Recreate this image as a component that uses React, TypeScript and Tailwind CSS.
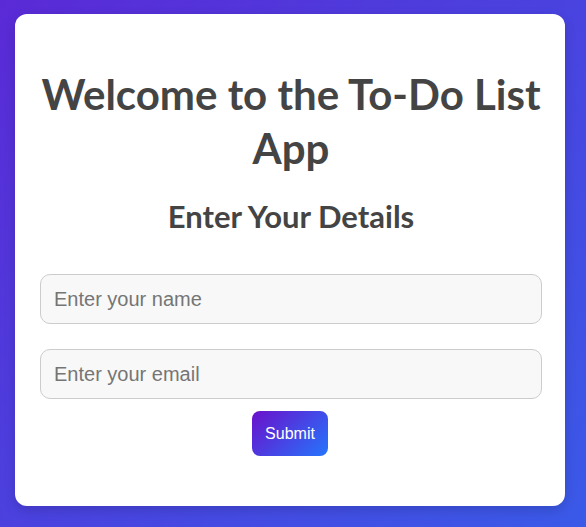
import React from "react";

export default function App() {
  return (
    <div className="min-h-[527px] w-full bg-[linear-gradient(135deg,#5a2ad6,#3a5ae8)] pl-[15px] pr-[21px] pt-[14px] pb-[22px]">
      <div className="flex flex-col items-center rounded-[12px] bg-white pl-[25px] pr-[23px] pt-[53px] pb-[50px] shadow-[0_4px_12px_rgba(0,0,0,0.15)]">
        <h1 className="text-center font-['Lato',sans-serif] text-[42px] font-bold leading-[54px] text-[#444]">
          Welcome to the To-Do List App
        </h1>
        <h2 className="mt-[22px] text-center font-['Lato',sans-serif] text-[31px] font-bold leading-[38px] text-[#444]">
          Enter Your Details
        </h2>
        <input
          placeholder="Enter your name"
          className="mt-[39px] h-[50px] w-[502px] rounded-[10px] border border-[#ccc] bg-[#f8f8f8] px-[13px] font-['Liberation_Sans',Arial,sans-serif] text-[20px] text-[#333] placeholder:text-[#757575] outline-none"
        />
        <input
          placeholder="Enter your email"
          className="mt-[25px] h-[50px] w-[502px] rounded-[10px] border border-[#ccc] bg-[#f8f8f8] px-[13px] font-['Liberation_Sans',Arial,sans-serif] text-[20px] text-[#333] placeholder:text-[#757575] outline-none"
        />
        <button className="mt-[12px] mr-[2px] h-[45px] w-[76px] rounded-[8px] bg-[linear-gradient(135deg,#6a11cb,#2575fc)] font-['Liberation_Sans',Arial,sans-serif] text-[16px] text-white">
          Submit
        </button>
      </div>
    </div>
  );
}
